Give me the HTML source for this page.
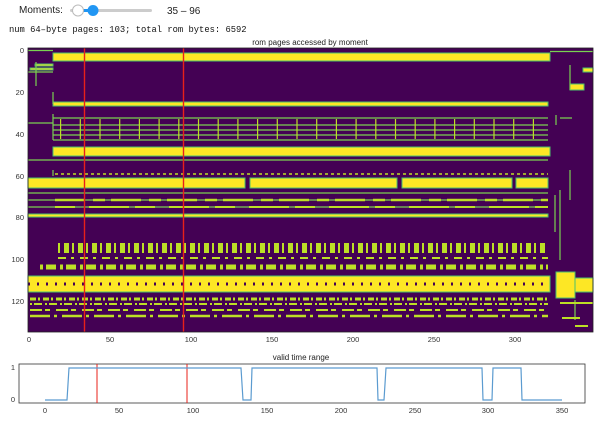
<!DOCTYPE html>
<html><head><style>
body{margin:0;width:600px;height:423px;background:#fff;overflow:hidden;font-family:"Liberation Sans",sans-serif;}
svg{position:absolute;left:0;top:0}
</style></head><body>
<svg width="600" height="423" viewBox="0 0 600 423" xmlns="http://www.w3.org/2000/svg" font-family="Liberation Sans, sans-serif">
<!-- slider -->
<text x="19" y="13" font-size="10" fill="#222">Moments:</text>
<rect x="70" y="9" width="82" height="3" rx="1.5" fill="#ccc"/>
<rect x="78" y="9" width="15" height="3" fill="#2196f3"/>
<circle cx="78" cy="10.5" r="5.5" fill="#fff" stroke="#bbb"/>
<circle cx="93" cy="10.5" r="5.5" fill="#2196f3"/>
<text x="167" y="14" font-size="10" fill="#222">35 – 96</text>
<text x="9" y="32" font-size="8.8" font-family="Liberation Mono, monospace" fill="#111">num 64–byte pages: 103; total rom bytes: 6592</text>
<text x="310" y="45" font-size="8" text-anchor="middle" fill="#222">rom pages accessed by moment</text>

<!-- heatmap -->
<rect x="28" y="48" width="565" height="284" fill="#440154"/>
<g fill="#fde725" stroke="#4ac16d" stroke-width="1">
<rect x="53" y="53" width="497" height="8"/>
<rect x="53" y="102" width="495" height="4"/>
<rect x="53" y="147" width="497" height="9"/>
<rect x="28" y="178" width="217" height="10"/>
<rect x="250" y="178" width="147" height="10"/>
<rect x="402" y="178" width="110" height="10"/>
<rect x="516" y="178" width="32" height="10"/>
<rect x="28" y="214" width="520" height="3"/>
<rect x="28" y="276" width="522" height="16"/>
<rect x="556" y="272" width="19" height="26"/>
<rect x="575" y="278" width="18" height="14"/>
<rect x="570" y="84" width="14" height="6"/>
<rect x="583" y="68" width="10" height="4"/>
<rect x="35" y="64" width="18" height="2"/>
<rect x="30" y="68" width="23" height="2"/>
</g>
<g stroke="#7ad151" stroke-width="1.2" fill="none">
<path d="M28 50.5H53M550 51.5H593M28 72H53M36 62V86M53 92V104M28 160H548M570 65V90M556 115V125M560 118H572"/>
<path d="M53 118H548M53 125H548M53 130H548M53 135H548M53 140H548"/>
<path d="M53 114V140M53 170V176M28 193H548M28 200H548M28 207H548"/>
<path d="M28 123H53M555 195V232M560 190V260M570 170V200M575 300V320"/>
</g>
<g stroke="#bddf26" fill="none">
<path d="M60 129H548" stroke-width="20" stroke-dasharray="1.2 18.5"/>
<path d="M55 174H548" stroke-width="1.5" stroke-dasharray="3 3"/>
<path d="M55 200H548" stroke-width="2.5" stroke-dasharray="30 8 12 6"/>
<path d="M55 207H548" stroke-width="2" stroke-dasharray="20 14 40 6"/>
<path d="M58 248H548" stroke-width="10" stroke-dasharray="2 4 5 3"/>
<path d="M58 258H548" stroke-width="2" stroke-dasharray="8 5 3 6"/>
<path d="M40 267H548" stroke-width="5" stroke-dasharray="3 3 10 4"/>
<path d="M30 299H548" stroke-width="3" stroke-dasharray="6 2 2 3"/>
<path d="M30 304H548" stroke-width="2" stroke-dasharray="2 2 8 3"/>
<path d="M30 310H548" stroke-width="2" stroke-dasharray="12 3 5 6"/>
<path d="M30 316H548" stroke-width="2.5" stroke-dasharray="20 4 3 5"/>
<path d="M560 303H593M562 318H580M575 326H588" stroke-width="2"/>
</g>
<path d="M28 284H550" stroke="#440154" stroke-width="3" stroke-dasharray="2 7"/>
<path d="M84.5 48V332M183.5 48V332" stroke="#e8201a" stroke-width="1.4"/>
<rect x="28" y="48" width="565" height="284" fill="none" stroke="#222" stroke-width="0.8"/>
<g font-size="7.5" fill="#333" text-anchor="end">
<text x="24" y="53">0</text><text x="24" y="95">20</text><text x="24" y="137">40</text><text x="24" y="179">60</text><text x="24" y="220">80</text><text x="24" y="262">100</text><text x="24" y="304">120</text>
</g>
<g font-size="7.5" fill="#333" text-anchor="middle">
<text x="29" y="342">0</text><text x="110" y="342">50</text><text x="191" y="342">100</text><text x="272" y="342">150</text><text x="353" y="342">200</text><text x="434" y="342">250</text><text x="515" y="342">300</text>
</g>
<!-- bottom plot -->
<text x="301" y="360" font-size="8" text-anchor="middle" fill="#222">valid time range</text>
<rect x="19" y="364" width="566" height="39" fill="#fff" stroke="#333" stroke-width="0.8"/>
<path d="M97 364V403M187 364V403" stroke="#e8201a" stroke-width="1"/>
<polyline fill="none" stroke="#5b9bd0" stroke-width="1.2" points="45,400 67,400 69,368 241,368 243,400 251,400 252,368 377,368 378,400 384,400 386,368 482,368 483,400 492,400 493,368 521,368 522,400 562,400"/>
<g font-size="7.5" fill="#333" text-anchor="end"><text x="15" y="370">1</text><text x="15" y="402">0</text></g>
<g font-size="7.5" fill="#333" text-anchor="middle">
<text x="45" y="413">0</text><text x="119" y="413">50</text><text x="193" y="413">100</text><text x="267" y="413">150</text><text x="341" y="413">200</text><text x="415" y="413">250</text><text x="488" y="413">300</text><text x="562" y="413">350</text>
</g>
</svg>
</body></html>
